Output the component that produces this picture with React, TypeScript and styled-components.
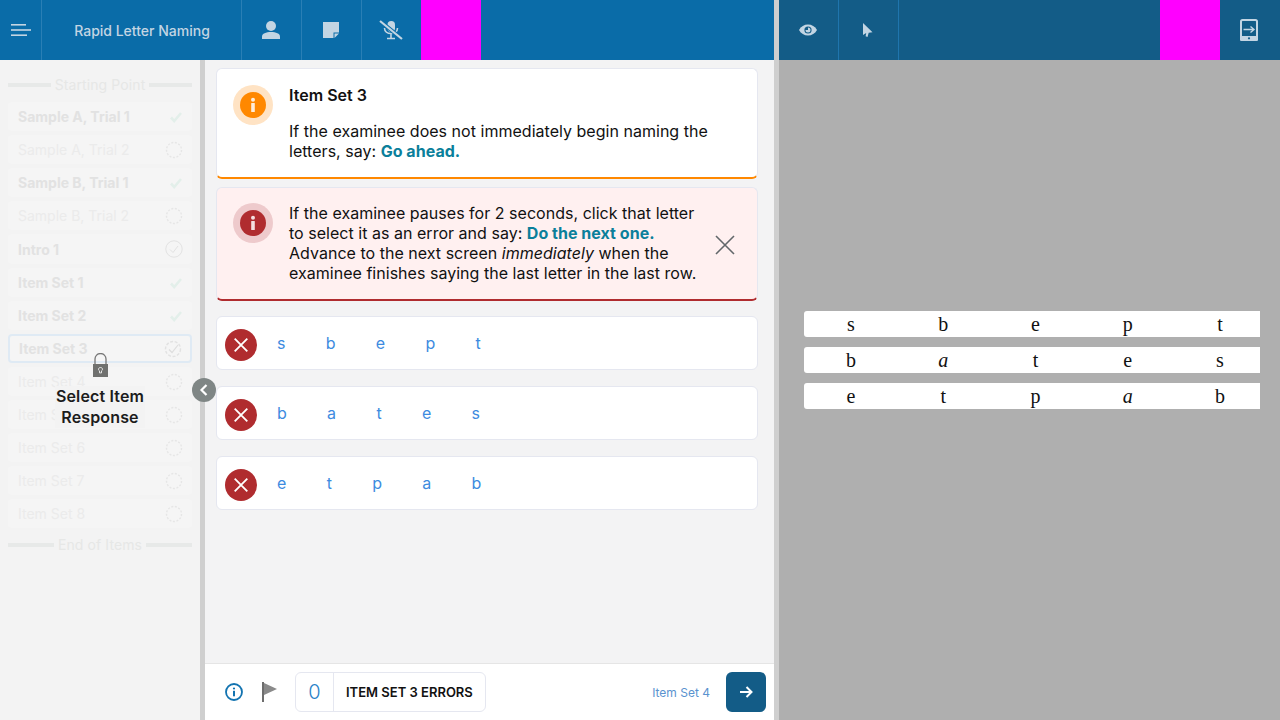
import React from 'react';
import styled, { createGlobalStyle } from 'styled-components';

const GlobalStyle = createGlobalStyle`
	html, body {
		margin: 0;
		padding: 0;
		height: 100%;
		overflow: hidden;
	}
	body {
		font-family: Inter, "Liberation Sans", sans-serif;
		color: #111;
	}
	* {
		box-sizing: border-box;
	}
`;

const Page = styled.div`
	display: grid;
	grid-template-columns: 774px 5px 501px;
	width: 1280px;
	height: 720px;
	overflow: hidden;
`;

const LeftPane = styled.div`
	display: flex;
	flex-direction: column;
	min-width: 0;
`;

const Divider = styled.div`
	background: #cfcfcf;
`;

const RightPane = styled.div`
	display: flex;
	flex-direction: column;
	background: #afafaf;
`;

const TopBar = styled.header<{ $dark?: boolean }>`
	display: flex;
	flex: none;
	height: 60px;
	background: ${p => (p.$dark ? '#135c87' : '#0a6ca8')};
`;

const BarCell = styled.div<{ $width: number; $line?: string }>`
	display: flex;
	flex: none;
	align-items: center;
	justify-content: center;
	width: ${p => p.$width}px;
	padding-right: 1px;
	border-right: 1px solid ${p => p.$line || 'transparent'};
	color: #c3d5e3;
`;

const MenuCell = styled(BarCell)`
	padding-right: 0;
	padding-left: 1px;
`;

const BarTitle = styled(BarCell)`
	padding-top: 1px;
	padding-right: 0;
	padding-left: 1px;
	font-size: 14px;
	font-weight: 500;
`;

const Spacer = styled.div`
	flex: 1;
`;

const Magenta = styled.div`
	flex: none;
	width: 60px;
	background: #ff00ff;
`;

const Workspace = styled.div`
	position: relative;
	display: grid;
	flex: 1;
	grid-template-columns: 200px 5px 569px;
	min-height: 0;
`;

const Sidebar = styled.aside`
	position: relative;
	padding: 17px 8px 0;
	background: #f3f3f3;
`;

const Rail = styled.div`
	background: #cfcfcf;
`;

const SideHeading = styled.div`
	display: flex;
	align-items: center;
	gap: 4px;
	height: 16px;
	color: #e6e7e6;
	font-size: 14px;
	letter-spacing: 0.1px;
	line-height: 16px;
	white-space: nowrap;

	&::before,
	&::after {
		content: '';
		flex: 1;
		height: 4px;
		background: #e7e9e8;
	}
`;

const SideList = styled.div`
	display: flex;
	flex-direction: column;
	gap: 4px;
	margin: 9px 0;
`;

const SideItem = styled.div<{ $done?: boolean; $current?: boolean; $tall?: boolean }>`
	display: flex;
	align-items: center;
	justify-content: space-between;
	height: ${p => (p.$tall ? 30 : 29)}px;
	padding: ${p => (p.$current ? '0 8px 0 9px' : '0 9px 0 10px')};
	border-radius: 4px;
	background: #f5f5f5;
	border: ${p => (p.$current ? '2px solid #dfeaf4' : '0')};
	color: ${p => (p.$done ? '#e2e2e2' : '#ebebeb')};
	font-size: 14px;
	font-weight: ${p => (p.$done ? 700 : 400)};
`;

const LockOverlay = styled.div`
	position: absolute;
	top: 293px;
	left: 0;
	display: flex;
	flex-direction: column;
	align-items: center;
	width: 200px;
`;

const LockLabel = styled.div`
	width: 90px;
	margin-top: 9px;
	background: #f3f3f3;
	color: #1c1c1c;
	font-size: 16px;
	font-weight: 600;
	letter-spacing: 0.15px;
	line-height: 21px;
	text-align: center;
`;

const CollapseKnob = styled.button`
	position: absolute;
	top: 318px;
	left: 192px;
	display: flex;
	align-items: center;
	justify-content: center;
	width: 24px;
	height: 24px;
	padding: 0;
	border: 0;
	border-radius: 50%;
	background: #7f8685;
`;

const Main = styled.main`
	display: flex;
	flex-direction: column;
	min-height: 0;
	background: #f3f3f4;
`;

const Content = styled.div`
	flex: 1;
	padding: 8px 16px 0 11px;
`;

const Notice = styled.section<{ $tone: 'warn' | 'error' }>`
	display: flex;
	gap: 16px;
	margin-bottom: ${p => (p.$tone === 'warn' ? 8 : 15)}px;
	padding: ${p => (p.$tone === 'warn' ? '16px' : '15px 16px 16px')};
	border: 1px solid #e5e7f0;
	border-bottom: 2px solid ${p => (p.$tone === 'warn' ? '#ff8800' : '#b02c2f')};
	border-radius: 6px;
	background: ${p => (p.$tone === 'warn' ? '#fff' : '#fff0f0')};
`;

const Halo = styled.div<{ $tone: 'warn' | 'error' }>`
	display: flex;
	flex: none;
	align-items: center;
	justify-content: center;
	width: 40px;
	height: 40px;
	border-radius: 50%;
	background: ${p => (p.$tone === 'warn' ? '#ffe3c4' : '#eecacc')};
	color: ${p => (p.$tone === 'warn' ? '#ff8800' : '#b02c2f')};
`;

const NoticeBody = styled.div<{ $narrow?: boolean }>`
	flex: ${p => (p.$narrow ? 'none' : 1)};
	width: ${p => (p.$narrow ? '414px' : 'auto')};
	font-size: 16px;
	letter-spacing: 0.025px;
	line-height: 20px;
`;

const NoticeTitle = styled.h2`
	margin: 0 0 16px;
	font-size: 16px;
	font-weight: 600;
	line-height: 20px;
`;

const NoticeText = styled.p`
	margin: 0;
`;

const Say = styled.strong`
	color: #0b7f9b;
	font-weight: 700;
`;

const CloseButton = styled.button`
	display: flex;
	align-self: center;
	margin-top: 4px;
	margin-left: auto;
	margin-right: 6px;
	padding: 0;
	border: 0;
	background: none;
	color: #62676a;
	transform: translateX(-4px);
`;

const LetterRow = styled.div`
	display: flex;
	align-items: center;
	gap: 20px;
	height: 54px;
	margin-bottom: 16px;
	padding-left: 8px;
	border: 1px solid #e5e7f0;
	border-radius: 6px;
	background: #fff;
`;

const RowClear = styled.button`
	display: flex;
	flex: none;
	align-items: center;
	justify-content: center;
	width: 32px;
	height: 32px;
	margin-top: 4px;
	padding: 0;
	border: 0;
	border-radius: 50%;
	background: #b02c2f;
`;

const Letters = styled.div`
	display: flex;
	gap: 40.3px;
	color: #3d8be0;
	font-size: 16px;
	line-height: 20px;
`;

const Footer = styled.footer`
	display: flex;
	flex: none;
	align-items: center;
	height: 57px;
	padding: 0 8px 0 20px;
	border-top: 1px solid #e5e5e5;
	background: #fff;
`;

const FooterIcon = styled.div<{ $gap: number }>`
	display: flex;
	flex: none;
	margin-right: ${p => p.$gap}px;
`;

const Counter = styled.div`
	display: flex;
	align-items: center;
	height: 40px;
	border: 1px solid #e5e7f0;
	border-radius: 6px;
`;

const CounterValue = styled.div`
	display: flex;
	align-items: center;
	justify-content: center;
	width: 38px;
	height: 100%;
	border-right: 1px solid #e5e7f0;
	color: #2a82c8;
	font-size: 20px;
	font-weight: 300;
`;

const CounterLabel = styled.div`
	padding: 0 12px;
	font-size: 13px;
	font-weight: 600;
`;

const NextLabel = styled.div`
	margin-left: auto;
	margin-right: 16px;
	color: #5a93cf;
	font-size: 12px;
`;

const NextButton = styled.button`
	display: flex;
	align-items: center;
	justify-content: center;
	width: 40px;
	height: 40px;
	padding: 0;
	border: 0;
	border-radius: 6px;
	background: #135c87;
	color: #fff;
`;

const Stage = styled.div`
	display: flex;
	flex: 1;
	flex-direction: column;
	justify-content: center;
	gap: 10px;
	padding: 0 20px 60px 25px;
`;

const StageRow = styled.div`
	display: flex;
	justify-content: space-between;
	height: 26px;
	padding: 0 30px 0 37px;
	border-radius: 3px 0 0 3px;
	background: #fff;
	color: #111;
	font-family: "Liberation Serif", serif;
	font-size: 20px;
	line-height: 27px;
`;

const StageLetter = styled.span<{ $slanted?: boolean }>`
	width: 20px;
	font-style: ${p => (p.$slanted ? 'italic' : 'normal')};
	text-align: center;
`;

const WhiteCross = styled.span`
	display: flex;
	color: #fff;
`;

const sideItems = [
	{ name: 'Sample A, Trial 1', state: 'check' },
	{ name: 'Sample A, Trial 2', state: 'open' },
	{ name: 'Sample B, Trial 1', state: 'check' },
	{ name: 'Sample B, Trial 2', state: 'open' },
	{ name: 'Intro 1', state: 'ring' },
	{ name: 'Item Set 1', state: 'check' },
	{ name: 'Item Set 2', state: 'check' },
	{ name: 'Item Set 3', state: 'current' },
	{ name: 'Item Set 4', state: 'open' },
	{ name: 'Item Set 5', state: 'open' },
	{ name: 'Item Set 6', state: 'open' },
	{ name: 'Item Set 7', state: 'open' },
	{ name: 'Item Set 8', state: 'open' },
];

const letterSets = ['sbept', 'bates', 'etpab'];

const StateIcon = ({ state }: { state: string }) => {
	if (state === 'check') {
		return (
			<svg width="14" height="12" viewBox="0 0 14 12" fill="none">
				<path d="M2 6.500 5.200 10 12 2" stroke="#e3efea" strokeWidth="2.600" />
			</svg>
		);
	}
	if (state === 'open') {
		return (
			<svg width="18" height="18" viewBox="0 0 18 18" fill="none">
				<circle cx="9" cy="9" r="7.500" stroke="#e6e6e6" strokeWidth="1.400" strokeDasharray="2 1.600" />
			</svg>
		);
	}
	if (state === 'ring') {
		return (
			<svg width="18" height="18" viewBox="0 0 18 18" fill="none">
				<circle cx="9" cy="9" r="8.200" stroke="#e2e2e2" strokeWidth="1" />
				<path d="M5 9.500 8 12.500l5-6.500" stroke="#e2e2e2" strokeWidth="1" />
			</svg>
		);
	}
	return (
		<svg width="18" height="18" viewBox="0 0 18 18" fill="none">
			<circle cx="9" cy="9" r="7.500" stroke="#e2e2e2" strokeWidth="1.400" strokeDasharray="3 1.600" />
			<path d="M5 9.500 8 12.500l6-7.500" stroke="#dddddd" strokeWidth="1.200" />
		</svg>
	);
};

const MenuIcon = () => (
	<svg width="20" height="12" viewBox="0 0 20 12" fill="currentColor">
		<rect width="15" height="1.600" x="0" y="0" />
		<rect width="20" height="1.600" x="0" y="5.200" />
		<rect width="16" height="1.600" x="0" y="10.400" />
	</svg>
);

const PersonIcon = () => (
	<svg width="18" height="18" viewBox="0 0 18 18" fill="currentColor">
		<circle cx="9" cy="5" r="5" />
		<path d="M0 18v-2.500C0 12.500 4 11 9 11s9 1.500 9 4.500V18z" />
	</svg>
);

const NoteIcon = () => (
	<svg width="16" height="16" viewBox="0 0 16 16" fill="currentColor">
		<path d="M0 0h16v10.500h-5.500V16H0z" />
		<path d="M11.500 11.500H16L11.500 16z" />
	</svg>
);

const MicOffIcon = () => (
	<svg width="24" height="20" viewBox="0 0 24 20" fill="none">
		<rect x="8.500" y="1" width="7.500" height="11" rx="3.700" fill="currentColor" />
		<path d="M5.500 8c0 3.500 3 5.500 6.500 5.500s6.500-2 6.500-5.500M12 13.500V18M8 18.500h8" stroke="currentColor" strokeWidth="1.600" />
		<path d="M1 1l22 18" stroke="#0a6ca8" strokeWidth="4" />
		<path d="M1 1l22 18" stroke="currentColor" strokeWidth="2.200" />
	</svg>
);

const EyeIcon = () => (
	<svg width="18" height="12" viewBox="0 0 18 12">
		<path d="M0 6c2-3.600 5.200-5.500 9-5.500S16 2.400 18 6c-2 3.600-5.200 5.500-9 5.500S2 9.600 0 6z" fill="currentColor" />
		<circle cx="9" cy="6" r="3.600" fill="#135c87" />
		<path d="M9 3.500a2.500 2.500 0 1 1-2.500 2.500H9z" fill="currentColor" />
	</svg>
);

const CursorIcon = () => (
	<svg width="10" height="15" viewBox="0 0 10 15" fill="currentColor">
		<path d="M0 0l9.500 9.300-3.800.4L4.500 14 2.600 13.300 3.200 10 0 12z" />
	</svg>
);

const TabletIcon = () => (
	<svg width="18" height="22" viewBox="0 0 18 22" fill="none">
		<rect x="1" y="1" width="16" height="20" rx="1.500" stroke="currentColor" strokeWidth="2" />
		<rect x="0" y="17" width="18" height="5" rx="1.500" fill="currentColor" />
		<circle cx="9" cy="19.300" r="1.100" fill="#135c87" />
		<path d="M3.500 10.500h10M10.500 7.500l3.500 3-3.500 3" stroke="currentColor" strokeWidth="1.400" />
	</svg>
);

const LockIcon = () => (
	<svg width="15" height="24" viewBox="0 0 15 24" fill="none">
		<path d="M2 11V6a5.500 5.500 0 0 1 11 0v5" stroke="#777" strokeWidth="1.300" />
		<rect x="0" y="11" width="15" height="13" fill="#70716f" />
		<path d="M7.500 14.500c1.300 0 2 .8 2 1.800 0 .8-.5 1.300-1 1.600v2h-2v-2c-.5-.3-1-.8-1-1.600 0-1 .7-1.800 2-1.800z" stroke="#fff" strokeWidth="0.800" />
	</svg>
);

const InfoGlyph = ({ size }: { size: number }) => (
	<svg width={size} height={size} viewBox="0 0 26 26">
		<circle cx="13" cy="13" r="13" fill="currentColor" />
		<circle cx="13" cy="7.800" r="2" fill="#fff" opacity="0.850" />
		<rect x="11.200" y="11" width="3.600" height="9" rx="0.500" fill="#fff" opacity="0.850" />
	</svg>
);

const Cross = ({ size, weight }: { size: number; weight: number }) => (
	<svg width={size} height={size} viewBox="0 0 20 20" fill="none">
		<path d="M1 1l18 18M19 1 1 19" stroke="currentColor" strokeWidth={weight} />
	</svg>
);

const App = () => {
	return (
		<>
			<GlobalStyle />
			<Page>
				<LeftPane>
					<TopBar>
						<MenuCell $width={42} $line="#2a7fb5"><MenuIcon /></MenuCell>
						<BarTitle $width={200} $line="#2a7fb5">Rapid Letter Naming</BarTitle>
						<BarCell $width={60} $line="#2a7fb5"><PersonIcon /></BarCell>
						<BarCell $width={60} $line="#2a7fb5"><NoteIcon /></BarCell>
						<BarCell $width={59}><MicOffIcon /></BarCell>
						<Magenta />
					</TopBar>
					<Workspace>
						<Sidebar>
							<SideHeading>Starting Point</SideHeading>
							<SideList>
								{sideItems.map(item => (
									<SideItem
										key={item.name}
										$done={item.state !== 'open'}
										$current={item.state === 'current'}
										$tall={item.state === 'ring'}
									>
										{item.name}
										<StateIcon state={item.state} />
									</SideItem>
								))}
							</SideList>
							<SideHeading>End of Items</SideHeading>
							<LockOverlay>
								<LockIcon />
								<LockLabel>Select Item Response</LockLabel>
							</LockOverlay>
						</Sidebar>
						<Rail />
						<CollapseKnob>
							<svg width="10" height="12" viewBox="0 0 10 12" fill="none">
								<path d="M7.500 1 2.500 6l5 5" stroke="#fff" strokeWidth="2.200" />
							</svg>
						</CollapseKnob>
						<Main>
							<Content>
								<Notice $tone="warn">
									<Halo $tone="warn"><InfoGlyph size={26} /></Halo>
									<NoticeBody>
										<NoticeTitle>Item Set 3</NoticeTitle>
										<NoticeText>
											If the examinee does not immediately begin naming the letters, say: <Say>Go ahead.</Say>
										</NoticeText>
									</NoticeBody>
								</Notice>
								<Notice $tone="error">
									<Halo $tone="error"><InfoGlyph size={26} /></Halo>
									<NoticeBody $narrow>
										<NoticeText>
											If the examinee pauses for 2 seconds, click that letter to select it as an error and say: <Say>Do the next one.</Say> Advance to the next screen <em>immediately</em> when the examinee finishes saying the last letter in the last row.
										</NoticeText>
									</NoticeBody>
									<CloseButton><Cross size={20} weight={1.600} /></CloseButton>
								</Notice>
								{letterSets.map(set => (
									<LetterRow key={set}>
										<RowClear><WhiteCross><Cross size={14} weight={2.600} /></WhiteCross></RowClear>
										<Letters>
											{set.split('').map((letter, i) => <span key={i}>{letter}</span>)}
										</Letters>
									</LetterRow>
								))}
							</Content>
							<Footer>
								<FooterIcon $gap={19}>
									<svg width="18" height="18" viewBox="0 0 18 18" fill="none">
										<circle cx="9" cy="9" r="8" stroke="#1273b0" strokeWidth="1.800" />
										<circle cx="9" cy="5.500" r="1.100" fill="#1273b0" />
										<rect x="8" y="7.800" width="2" height="5.500" fill="#1273b0" />
									</svg>
								</FooterIcon>
								<FooterIcon $gap={18}>
									<svg width="15" height="20" viewBox="0 0 15 20">
										<rect x="0" y="0" width="2" height="20" fill="#6d6d6d" />
										<path d="M2 1l13 6-13 6z" fill="#8a8a8a" />
									</svg>
								</FooterIcon>
								<Counter>
									<CounterValue>0</CounterValue>
									<CounterLabel>ITEM SET 3 ERRORS</CounterLabel>
								</Counter>
								<NextLabel>Item Set 4</NextLabel>
								<NextButton>
									<svg width="14" height="14" viewBox="0 0 14 14" fill="none">
										<path d="M1 7h11M7.500 2l5 5-5 5" stroke="currentColor" strokeWidth="2" />
									</svg>
								</NextButton>
							</Footer>
						</Main>
					</Workspace>
				</LeftPane>
				<Divider />
				<RightPane>
					<TopBar $dark>
						<BarCell $width={60} $line="#1f75ad"><EyeIcon /></BarCell>
						<BarCell $width={60} $line="#1f75ad"><CursorIcon /></BarCell>
						<Spacer />
						<Magenta />
						<BarCell $width={60}><TabletIcon /></BarCell>
					</TopBar>
					<Stage>
						{letterSets.map(set => (
							<StageRow key={set}>
								{set.split('').map((letter, i) => (
									<StageLetter key={i} $slanted={letter === 'a'}>{letter}</StageLetter>
								))}
							</StageRow>
						))}
					</Stage>
				</RightPane>
			</Page>
		</>
	);
};

export default App;
